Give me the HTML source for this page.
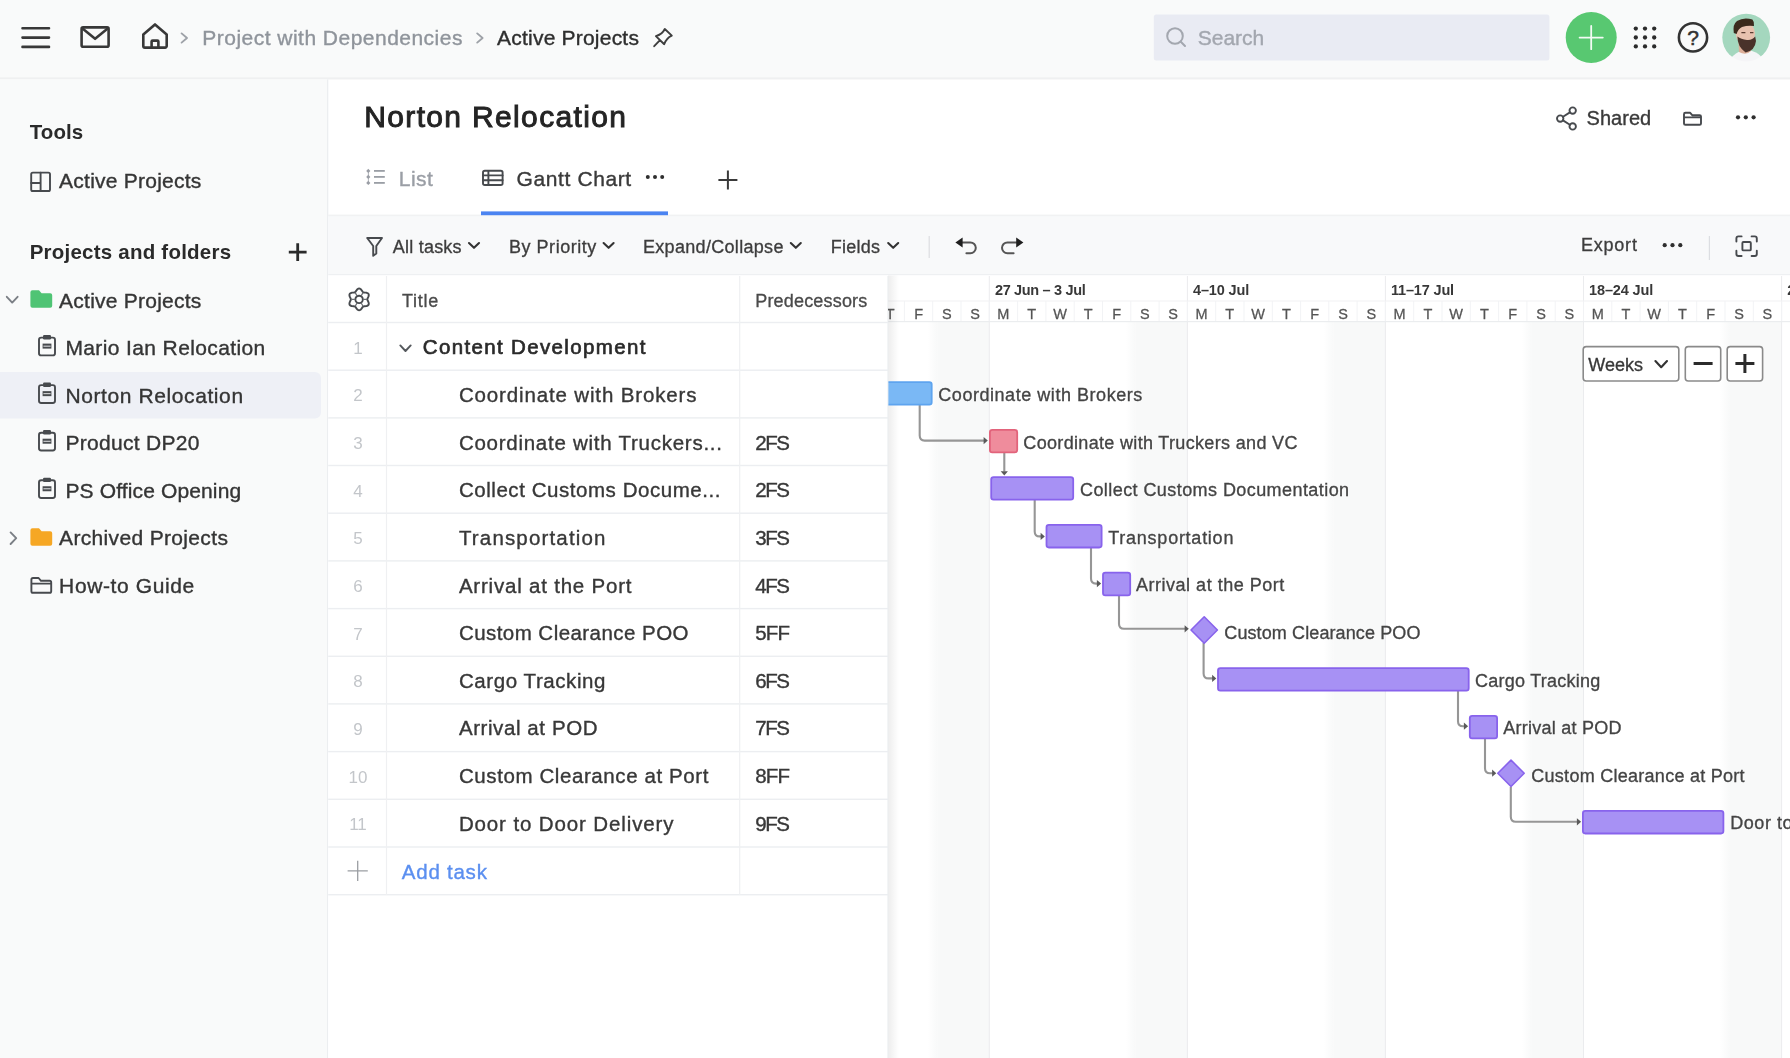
<!DOCTYPE html>
<html lang="en"><head><meta charset="utf-8"><title>Norton Relocation – Gantt Chart</title>
<style>
html,body{margin:0;padding:0;}
body{width:1790px;height:1058px;overflow:hidden;background:#fff;position:relative;font-family:"Liberation Sans",sans-serif;}
#art{position:absolute;left:0;top:0;width:1790px;height:1058px;display:block;}
.t{position:absolute;white-space:pre;line-height:1;}
#txt,#gtxt{position:absolute;left:0;top:0;width:1790px;height:1058px;will-change:transform;}
#gtxt{clip-path:inset(275px 0 0 888px);}

</style></head>
<body>
<svg id="art" width="1790" height="1058" viewBox="0 0 1790 1058">
<defs>
<linearGradient id="shw" x1="0" x2="1" y1="0" y2="0"><stop offset="0" stop-color="#000" stop-opacity="0.07"/><stop offset="1" stop-color="#000" stop-opacity="0"/></linearGradient>
<linearGradient id="wkl" x1="0" x2="1" y1="0" y2="0"><stop offset="0" stop-color="#f8f9f9" stop-opacity="0"/><stop offset="1" stop-color="#f8f9f9" stop-opacity="1"/></linearGradient>
<clipPath id="avc"><circle cx="1746.2" cy="37.6" r="23.9"/></clipPath>
<filter id="soft" x="-10%" y="-10%" width="120%" height="120%"><feGaussianBlur stdDeviation="0.7"/></filter>
<clipPath id="gclip"><rect x="888" y="274.6" width="902" height="784"/></clipPath>
</defs>
<rect x="0" y="0" width="1790" height="79.4" fill="#f9fafa"/>
<rect x="0" y="77.4" width="1790" height="2" fill="#eff0f1"/>
<rect x="0" y="79.4" width="327.5" height="981" fill="#f9fafa"/>
<rect x="327" y="79.4" width="1.3" height="981" fill="#eceef0"/>
<path d="M0,372 H315 a6,6 0 0 1 6,6 V412.5 a6,6 0 0 1 -6,6 H0 Z" fill="#eef0f6"/>
<rect x="328.2" y="215" width="1462" height="59.6" fill="#f8f9fa"/>
<rect x="328.2" y="214.6" width="1462" height="1.6" fill="#f1f2f3"/>
<rect x="481" y="211.4" width="187" height="3.8" fill="#4b84f1"/>
<g clip-path="url(#gclip)">
<rect x="888" y="274.6" width="902" height="784" fill="#fff"/>
<rect x="729.6" y="322" width="10" height="740" fill="url(#wkl)"/><rect x="739.6" y="322" width="51.6" height="740" fill="#f8f9f9"/>
<rect x="927.7" y="322" width="10" height="740" fill="url(#wkl)"/><rect x="937.7" y="322" width="51.6" height="740" fill="#f8f9f9"/>
<rect x="1125.8" y="322" width="10" height="740" fill="url(#wkl)"/><rect x="1135.8" y="322" width="51.6" height="740" fill="#f8f9f9"/>
<rect x="1323.8" y="322" width="10" height="740" fill="url(#wkl)"/><rect x="1333.8" y="322" width="51.6" height="740" fill="#f8f9f9"/>
<rect x="1521.9" y="322" width="10" height="740" fill="url(#wkl)"/><rect x="1531.9" y="322" width="51.6" height="740" fill="#f8f9f9"/>
<rect x="1720.0" y="322" width="10" height="740" fill="url(#wkl)"/><rect x="1730.0" y="322" width="51.6" height="740" fill="#f8f9f9"/>
<rect x="988.8" y="276" width="1" height="790" fill="#ebecee"/>
<rect x="1186.9" y="276" width="1" height="790" fill="#ebecee"/>
<rect x="1384.9" y="276" width="1" height="790" fill="#ebecee"/>
<rect x="1583.0" y="276" width="1" height="790" fill="#ebecee"/>
<rect x="1781.1" y="276" width="1" height="790" fill="#ebecee"/>
<rect x="875.6" y="301" width="1" height="20" fill="#f2f3f5"/>
<rect x="903.9" y="301" width="1" height="20" fill="#f2f3f5"/>
<rect x="932.2" y="301" width="1" height="20" fill="#f2f3f5"/>
<rect x="960.5" y="301" width="1" height="20" fill="#f2f3f5"/>
<rect x="988.8" y="301" width="1" height="20" fill="#f2f3f5"/>
<rect x="1017.1" y="301" width="1" height="20" fill="#f2f3f5"/>
<rect x="1045.4" y="301" width="1" height="20" fill="#f2f3f5"/>
<rect x="1073.7" y="301" width="1" height="20" fill="#f2f3f5"/>
<rect x="1102.0" y="301" width="1" height="20" fill="#f2f3f5"/>
<rect x="1130.3" y="301" width="1" height="20" fill="#f2f3f5"/>
<rect x="1158.6" y="301" width="1" height="20" fill="#f2f3f5"/>
<rect x="1186.9" y="301" width="1" height="20" fill="#f2f3f5"/>
<rect x="1215.2" y="301" width="1" height="20" fill="#f2f3f5"/>
<rect x="1243.5" y="301" width="1" height="20" fill="#f2f3f5"/>
<rect x="1271.8" y="301" width="1" height="20" fill="#f2f3f5"/>
<rect x="1300.1" y="301" width="1" height="20" fill="#f2f3f5"/>
<rect x="1328.3" y="301" width="1" height="20" fill="#f2f3f5"/>
<rect x="1356.6" y="301" width="1" height="20" fill="#f2f3f5"/>
<rect x="1384.9" y="301" width="1" height="20" fill="#f2f3f5"/>
<rect x="1413.2" y="301" width="1" height="20" fill="#f2f3f5"/>
<rect x="1441.5" y="301" width="1" height="20" fill="#f2f3f5"/>
<rect x="1469.8" y="301" width="1" height="20" fill="#f2f3f5"/>
<rect x="1498.1" y="301" width="1" height="20" fill="#f2f3f5"/>
<rect x="1526.4" y="301" width="1" height="20" fill="#f2f3f5"/>
<rect x="1554.7" y="301" width="1" height="20" fill="#f2f3f5"/>
<rect x="1583.0" y="301" width="1" height="20" fill="#f2f3f5"/>
<rect x="1611.3" y="301" width="1" height="20" fill="#f2f3f5"/>
<rect x="1639.6" y="301" width="1" height="20" fill="#f2f3f5"/>
<rect x="1667.9" y="301" width="1" height="20" fill="#f2f3f5"/>
<rect x="1696.2" y="301" width="1" height="20" fill="#f2f3f5"/>
<rect x="1724.5" y="301" width="1" height="20" fill="#f2f3f5"/>
<rect x="1752.8" y="301" width="1" height="20" fill="#f2f3f5"/>
<rect x="1781.1" y="301" width="1" height="20" fill="#f2f3f5"/>
<rect x="1809.4" y="301" width="1" height="20" fill="#f2f3f5"/>
<rect x="888" y="300.5" width="902" height="1" fill="#f1f2f4"/>
<rect x="888" y="321" width="902" height="1.2" fill="#ebedef"/>
<rect x="888" y="275.5" width="11" height="783" fill="url(#shw)"/>
<path d="M919.7,405 V435.6 Q919.7,440.6 924.7,440.6 H985" fill="none" stroke="#969696" stroke-width="2.1" stroke-linejoin="round"/><path d="M983.6,437.0 L987.8,440.6 L983.6,444.2 Z" fill="#5a5a5a"/>
<path d="M1004.3,453 V471.5" fill="none" stroke="#969696" stroke-width="2.1" stroke-linejoin="round"/><path d="M1000.7,471.2 L1004.3,475.4 L1007.9,471.2 Z" fill="#5a5a5a"/>
<path d="M1034.7,500 V531.4 Q1034.7,536.4 1039.7,536.4 H1042" fill="none" stroke="#969696" stroke-width="2.1" stroke-linejoin="round"/><path d="M1040.6,532.8 L1044.8,536.4 L1040.6,540.0 Z" fill="#5a5a5a"/>
<path d="M1091,548 V578.6 Q1091,583.6 1096,583.6 H1098.3" fill="none" stroke="#969696" stroke-width="2.1" stroke-linejoin="round"/><path d="M1096.9,580.0 L1101.1,583.6 L1096.9,587.2 Z" fill="#5a5a5a"/>
<path d="M1119,596 V623.8 Q1119,628.8 1124,628.8 H1186" fill="none" stroke="#969696" stroke-width="2.1" stroke-linejoin="round"/><path d="M1184.6,625.2 L1188.8,628.8 L1184.6,632.4 Z" fill="#5a5a5a"/>
<path d="M1203.6,643 V673.4 Q1203.6,678.4 1208.6,678.4 H1213.5" fill="none" stroke="#969696" stroke-width="2.1" stroke-linejoin="round"/><path d="M1212.1,674.8 L1216.3,678.4 L1212.1,682.0 Z" fill="#5a5a5a"/>
<path d="M1458,691 V721.2 Q1458,726.2 1463,726.2 H1465.3" fill="none" stroke="#969696" stroke-width="2.1" stroke-linejoin="round"/><path d="M1463.9,722.6 L1468.1,726.2 L1463.9,729.8 Z" fill="#5a5a5a"/>
<path d="M1485,739 V768.2 Q1485,773.2 1490,773.2 H1493.5" fill="none" stroke="#969696" stroke-width="2.1" stroke-linejoin="round"/><path d="M1492.1,769.6 L1496.3,773.2 L1492.1,776.8 Z" fill="#5a5a5a"/>
<path d="M1510.8,787 V816.8 Q1510.8,821.8 1515.8,821.8 H1578.3" fill="none" stroke="#969696" stroke-width="2.1" stroke-linejoin="round"/><path d="M1576.9,818.2 L1581.1,821.8 L1576.9,825.4 Z" fill="#5a5a5a"/>
<rect x="870.5" y="382.1" width="61.2" height="22.6" rx="2.4" fill="#7ab8f5" stroke="#5ea4ef" stroke-width="1.8"/>
<rect x="989.9" y="429.8" width="27.3" height="22.6" rx="2.4" fill="#ef8c9c" stroke="#e2637b" stroke-width="1.8"/>
<rect x="991.2" y="477.1" width="82.0" height="22.6" rx="2.4" fill="#a791f4" stroke="#8863ec" stroke-width="1.8"/>
<rect x="1046.5" y="524.9" width="55.1" height="22.6" rx="2.4" fill="#a791f4" stroke="#8863ec" stroke-width="1.8"/>
<rect x="1103.0" y="572.7" width="27.2" height="22.6" rx="2.4" fill="#a791f4" stroke="#8863ec" stroke-width="1.8"/>
<rect x="1218.0" y="668.1" width="250.7" height="22.6" rx="2.4" fill="#a791f4" stroke="#8863ec" stroke-width="1.8"/>
<rect x="1469.8" y="715.8" width="27.3" height="22.6" rx="2.4" fill="#a791f4" stroke="#8863ec" stroke-width="1.8"/>
<rect x="1582.9" y="810.9" width="140.5" height="22.6" rx="2.4" fill="#a791f4" stroke="#8863ec" stroke-width="1.8"/>
<path d="M1204.2,616.8 L1217.4,630 L1204.2,643.2 L1191.0,630 Z" fill="#a791f4" stroke="#8863ec" stroke-width="1.6" stroke-linejoin="round"/>
<path d="M1511,760.0999999999999 L1524.2,773.3 L1511,786.5 L1497.8,773.3 Z" fill="#a791f4" stroke="#8863ec" stroke-width="1.6" stroke-linejoin="round"/>
<rect x="1583.2" y="346.6" width="95.6" height="34.4" rx="3" fill="#fff" stroke="#8a8a8a" stroke-width="1.6"/>
<rect x="1685.3" y="346.6" width="35.4" height="34.4" rx="3" fill="#fff" stroke="#8a8a8a" stroke-width="1.6"/>
<rect x="1727.2" y="346.6" width="35.4" height="34.4" rx="3" fill="#fff" stroke="#8a8a8a" stroke-width="1.6"/>
<path d="M1655.4,361 L1661.2,367.2 L1667,361" fill="none" stroke="#333" stroke-width="2.1" stroke-linecap="round" stroke-linejoin="round"/>
<path d="M1693.6,363.6 H1712.6" stroke="#2b2b2b" stroke-width="3" fill="none"/>
<path d="M1735.4,363.6 H1754.4 M1744.9,354.1 V373.1" stroke="#2b2b2b" stroke-width="3" fill="none"/>
</g>
<rect x="328.2" y="274.6" width="559.8" height="784" fill="#fff"/>
<rect x="328.2" y="321.8" width="559.8" height="1.4" fill="#eceef1"/>
<rect x="328.2" y="369.5" width="559.8" height="1.4" fill="#eceef1"/>
<rect x="328.2" y="417.2" width="559.8" height="1.4" fill="#eceef1"/>
<rect x="328.2" y="464.8" width="559.8" height="1.4" fill="#eceef1"/>
<rect x="328.2" y="512.5" width="559.8" height="1.4" fill="#eceef1"/>
<rect x="328.2" y="560.2" width="559.8" height="1.4" fill="#eceef1"/>
<rect x="328.2" y="607.9" width="559.8" height="1.4" fill="#eceef1"/>
<rect x="328.2" y="655.6" width="559.8" height="1.4" fill="#eceef1"/>
<rect x="328.2" y="703.2" width="559.8" height="1.4" fill="#eceef1"/>
<rect x="328.2" y="750.9" width="559.8" height="1.4" fill="#eceef1"/>
<rect x="328.2" y="798.6" width="559.8" height="1.4" fill="#eceef1"/>
<rect x="328.2" y="846.3" width="559.8" height="1.4" fill="#eceef1"/>
<rect x="328.2" y="894.0" width="559.8" height="1.4" fill="#eceef1"/>
<rect x="385.9" y="276" width="1.2" height="619" fill="#eff0f2"/>
<rect x="739.1" y="276" width="1.2" height="619" fill="#eff0f2"/>
<rect x="887.4" y="276" width="1" height="783" fill="#eceef0"/>
<rect x="328.2" y="274" width="1462" height="1.2" fill="#eef0f2"/>
<path d="M22.5,28.2 H49 M22.5,37.6 H49 M22.5,46.9 H49" fill="none" stroke="#383838" stroke-width="2.6" stroke-linecap="round" stroke-linejoin="round"/>
<rect x="81.6" y="27.4" width="27" height="19.4" rx="1.5" fill="none" stroke="#383838" stroke-width="2.6" stroke-linecap="round" stroke-linejoin="round"/><path d="M82.5,28.6 L95.1,38.8 L107.7,28.6" fill="none" stroke="#383838" stroke-width="2.6" stroke-linecap="round" stroke-linejoin="round"/>
<path d="M143.3,34.6 L155,24.4 L166.7,34.6 V46 a1.6,1.6 0 0 1 -1.6,1.6 H144.9 a1.6,1.6 0 0 1 -1.6,-1.6 Z" fill="none" stroke="#383838" stroke-width="2.6" stroke-linecap="round" stroke-linejoin="round"/><path d="M151.6,47.4 V41.6 a1,1 0 0 1 1,-1 H157.4 a1,1 0 0 1 1,1 V47.4" fill="none" stroke="#383838" stroke-width="2.6" stroke-linecap="round" stroke-linejoin="round"/>
<path d="M181.6,33.4 L187,38 L181.6,42.6" fill="none" stroke="#9ea2a8" stroke-width="1.9" stroke-linecap="round" stroke-linejoin="round"/>
<path d="M477.2,33.4 L482.6,38 L477.2,42.6" fill="none" stroke="#9ea2a8" stroke-width="1.9" stroke-linecap="round" stroke-linejoin="round"/>
<path d="M664.8,29 L671.8,35.6 Q666.4,38 664.2,44.2 L655.9,36.1 Q662.2,34.4 664.8,29 Z M660,40.2 L654.2,46.2" fill="none" stroke="#3e3e3e" stroke-width="1.9" stroke-linejoin="round" stroke-linecap="round"/>
<rect x="1153.8" y="14.6" width="395.6" height="45.8" rx="2.5" fill="#e9ebf3"/>
<circle cx="1175" cy="36" r="7.8" fill="none" stroke="#a3a7af" stroke-width="2"/><path d="M1180.8,41.8 L1185,46" stroke="#a3a7af" stroke-width="2" stroke-linecap="round"/>
<circle cx="1591.2" cy="37.5" r="25.5" fill="#58c871"/><path d="M1579.6,37.6 H1602.8 M1591.2,26 V49.2" stroke="#f3fbf5" stroke-width="1.8" stroke-linecap="round"/>
<circle cx="1635.8" cy="28.6" r="2.15" fill="#2b2b2b"/>
<circle cx="1635.8" cy="37.5" r="2.15" fill="#2b2b2b"/>
<circle cx="1635.8" cy="46.4" r="2.15" fill="#2b2b2b"/>
<circle cx="1645" cy="28.6" r="2.15" fill="#2b2b2b"/>
<circle cx="1645" cy="37.5" r="2.15" fill="#2b2b2b"/>
<circle cx="1645" cy="46.4" r="2.15" fill="#2b2b2b"/>
<circle cx="1654.2" cy="28.6" r="2.15" fill="#2b2b2b"/>
<circle cx="1654.2" cy="37.5" r="2.15" fill="#2b2b2b"/>
<circle cx="1654.2" cy="46.4" r="2.15" fill="#2b2b2b"/>
<circle cx="1693" cy="37.4" r="14.1" fill="none" stroke="#333" stroke-width="2.6"/>
<text x="1693" y="44.8" text-anchor="middle" font-family="Liberation Sans, sans-serif" font-size="21" font-weight="400" stroke="#333" stroke-width="0.5" fill="#333">?</text>
<g clip-path="url(#avc)" filter="url(#soft)">
<rect x="1718" y="10" width="58" height="56" fill="#a4d7be"/>
<path d="M1727,66 L1731,58 Q1736,52.5 1741,51 L1752,51 Q1759,53 1762,58 L1766,66 Z" fill="#f5f5f7"/>
<path d="M1738.5,42 L1739,52 Q1746,56 1751,51 L1752,44 Z" fill="#dcae98"/>
<ellipse cx="1745.4" cy="33.4" rx="9.6" ry="11.2" fill="#e8c2af"/>
<path d="M1733.8,33 Q1732.6,24 1737,21 Q1744,16.6 1752.4,19.6 Q1754.6,22 1754,26 Q1748,25 1742,27 Q1738,29 1736.6,34 Z" fill="#3a291e"/>
<path d="M1737.4,36.6 Q1737.4,47 1745.6,52.4 Q1755,50.6 1756,41 L1755.2,36.6 Q1752,40.6 1747,40 Q1741,39.6 1737.4,36.6 Z" fill="#49332a"/>
<path d="M1741.4,32.6 h4 M1750,32.6 h3.4" stroke="#5a3d30" stroke-width="1.4"/>
</g>
<rect x="31.2" y="172.6" width="18.8" height="18.4" rx="1.6" fill="none" stroke="#474a4e" stroke-width="1.9" stroke-linecap="round" stroke-linejoin="round"/><path d="M40.6,172.6 V191 M31.2,183 H40.6" fill="none" stroke="#474a4e" stroke-width="1.9" stroke-linecap="round" stroke-linejoin="round"/>
<path d="M288.8,252.2 H306.6 M297.7,243.3 V261.1" stroke="#2b2b2b" stroke-width="2.8" fill="none"/>
<path d="M6.8,296.8 L12.2,302.6 L17.6,296.8" fill="none" stroke="#7b7f85" stroke-width="1.9" stroke-linecap="round" stroke-linejoin="round"/>
<path d="M10.6,532.4 L16.2,538.2 L10.6,544" fill="none" stroke="#7b7f85" stroke-width="1.9" stroke-linecap="round" stroke-linejoin="round"/>
<path d="M30.4,292.3 a2,2 0 0 1 2,-2 h6.6 l2.6,3 h8.6 a2,2 0 0 1 2,2 v10.4 a2,2 0 0 1 -2,2 h-17.8 a2,2 0 0 1 -2,-2 Z" fill="#4fc474"/>
<path d="M30.4,530.3 a2,2 0 0 1 2,-2 h6.6 l2.6,3 h8.6 a2,2 0 0 1 2,2 v10.4 a2,2 0 0 1 -2,2 h-17.8 a2,2 0 0 1 -2,-2 Z" fill="#f6a724"/>
<path d="M31.4,579.6 a1.6,1.6 0 0 1 1.6,-1.6 h5.6 l2.4,2.8 h8.6 a1.6,1.6 0 0 1 1.6,1.6 v8.8 a1.6,1.6 0 0 1 -1.6,1.6 h-16.6 a1.6,1.6 0 0 1 -1.6,-1.6 Z M31.4,583.6 H51" fill="none" stroke="#474a4e" stroke-width="1.9" stroke-linecap="round" stroke-linejoin="round"/>
<rect x="39" y="337.6" width="16" height="17.8" rx="2.2" fill="none" stroke="#474a4e" stroke-width="1.9" stroke-linecap="round" stroke-linejoin="round"/><rect x="43" y="335.0" width="8" height="4.4" rx="1.2" fill="#474a4e"/><rect x="42.6" y="343.6" width="8.8" height="5" fill="#474a4e"/><rect x="43.4" y="345.7" width="7.2" height="0.9" fill="#f4f5f7"/>
<rect x="39" y="385.15000000000003" width="16" height="17.8" rx="2.2" fill="none" stroke="#474a4e" stroke-width="1.9" stroke-linecap="round" stroke-linejoin="round"/><rect x="43" y="382.55" width="8" height="4.4" rx="1.2" fill="#474a4e"/><rect x="42.6" y="391.15000000000003" width="8.8" height="5" fill="#474a4e"/><rect x="43.4" y="393.25" width="7.2" height="0.9" fill="#f4f5f7"/>
<rect x="39" y="432.70000000000005" width="16" height="17.8" rx="2.2" fill="none" stroke="#474a4e" stroke-width="1.9" stroke-linecap="round" stroke-linejoin="round"/><rect x="43" y="430.1" width="8" height="4.4" rx="1.2" fill="#474a4e"/><rect x="42.6" y="438.70000000000005" width="8.8" height="5" fill="#474a4e"/><rect x="43.4" y="440.8" width="7.2" height="0.9" fill="#f4f5f7"/>
<rect x="39" y="480.25" width="16" height="17.8" rx="2.2" fill="none" stroke="#474a4e" stroke-width="1.9" stroke-linecap="round" stroke-linejoin="round"/><rect x="43" y="477.65" width="8" height="4.4" rx="1.2" fill="#474a4e"/><rect x="42.6" y="486.25" width="8.8" height="5" fill="#474a4e"/><rect x="43.4" y="488.34999999999997" width="7.2" height="0.9" fill="#f4f5f7"/>
<circle cx="1572.7" cy="110.6" r="3.2" fill="none" stroke="#474a4e" stroke-width="1.9" stroke-linecap="round" stroke-linejoin="round"/><circle cx="1560.2" cy="118.6" r="3.2" fill="none" stroke="#474a4e" stroke-width="1.9" stroke-linecap="round" stroke-linejoin="round"/><circle cx="1572.7" cy="126.4" r="3.2" fill="none" stroke="#474a4e" stroke-width="1.9" stroke-linecap="round" stroke-linejoin="round"/><path d="M1563,116.8 L1569.9,112.4 M1563,120.4 L1569.9,124.7" fill="none" stroke="#474a4e" stroke-width="1.9" stroke-linecap="round" stroke-linejoin="round"/>
<path d="M1684,114.2 a1.4,1.4 0 0 1 1.4,-1.4 h4.8 l2,2.4 h7.4 a1.4,1.4 0 0 1 1.4,1.4 v6.8 a1.4,1.4 0 0 1 -1.4,1.4 h-14.2 a1.4,1.4 0 0 1 -1.4,-1.4 Z M1684,117.4 H1701" fill="none" stroke="#474a4e" stroke-width="1.9" stroke-linecap="round" stroke-linejoin="round"/>
<circle cx="1738" cy="117.3" r="2.1" fill="#2f2f2f"/>
<circle cx="1745.8" cy="117.3" r="2.1" fill="#2f2f2f"/>
<circle cx="1753.6" cy="117.3" r="2.1" fill="#2f2f2f"/>
<path d="M368.3,168.8 L370.4,170.9 L368.3,173.0 L366.2,170.9 Z" fill="#9a9ea5"/><rect x="374" y="170.0" width="10.8" height="1.8" fill="#9a9ea5"/>
<path d="M368.3,174.8 L370.4,176.9 L368.3,179.0 L366.2,176.9 Z" fill="#9a9ea5"/><rect x="374" y="176.0" width="10.8" height="1.8" fill="#9a9ea5"/>
<path d="M368.3,180.8 L370.4,182.9 L368.3,185.0 L366.2,182.9 Z" fill="#9a9ea5"/><rect x="374" y="182.0" width="10.8" height="1.8" fill="#9a9ea5"/>
<rect x="367.9" y="170" width="0.8" height="14" fill="#9a9ea5"/>
<rect x="483" y="170.8" width="19.6" height="14.2" rx="1.8" fill="none" stroke="#474a4e" stroke-width="1.9" stroke-linecap="round" stroke-linejoin="round"/><path d="M483,175.4 H502.6 M483,180.2 H502.6 M488.4,171 V185" fill="none" stroke="#474a4e" stroke-width="1.9" stroke-linecap="round" stroke-linejoin="round" stroke-width="2"/>
<circle cx="647.8" cy="176.9" r="2" fill="#2f2f2f"/>
<circle cx="655" cy="176.9" r="2" fill="#2f2f2f"/>
<circle cx="662.2" cy="176.9" r="2" fill="#2f2f2f"/>
<path d="M718.4,180 H737.4 M727.9,170.5 V189.5" stroke="#3a3a3a" stroke-width="2" fill="none"/>
<path d="M367.2,238 H382 L376.3,246 V253.4 L373.2,255.8 V246 Z" fill="none" stroke="#474a4e" stroke-width="1.9" stroke-linecap="round" stroke-linejoin="round" stroke-width="1.9"/>
<path d="M469,243 L474,247.8 L479,243" fill="none" stroke="#333" stroke-width="2.1" stroke-linecap="round" stroke-linejoin="round"/>
<path d="M603.6,243 L608.6,247.8 L613.6,243" fill="none" stroke="#333" stroke-width="2.1" stroke-linecap="round" stroke-linejoin="round"/>
<path d="M790.8,243 L795.8,247.8 L800.8,243" fill="none" stroke="#333" stroke-width="2.1" stroke-linecap="round" stroke-linejoin="round"/>
<path d="M888.2,243 L893.2,247.8 L898.2,243" fill="none" stroke="#333" stroke-width="2.1" stroke-linecap="round" stroke-linejoin="round"/>
<rect x="928.6" y="236" width="1.2" height="22" fill="#dcdee2"/>
<path d="M962,242.4 H970.4 a5.4,5.4 0 0 1 0,10.8 H966.4" fill="none" stroke="#555" stroke-width="2" stroke-linecap="round" stroke-linejoin="round"/><path d="M962.6,237.4 L955.4,242.4 L962.6,247.4 Z" fill="#1f1f1f"/>
<path d="M1016.5,242.4 H1007.4 a5.4,5.4 0 0 0 0,10.8 H1013.6" fill="none" stroke="#555" stroke-width="2" stroke-linecap="round" stroke-linejoin="round"/><path d="M1016.2,237.4 L1023.4,242.4 L1016.2,247.4 Z" fill="#1f1f1f"/>
<circle cx="1664.7" cy="245.2" r="2.1" fill="#2f2f2f"/>
<circle cx="1672.5" cy="245.2" r="2.1" fill="#2f2f2f"/>
<circle cx="1680.3" cy="245.2" r="2.1" fill="#2f2f2f"/>
<rect x="1708.8" y="236" width="1.2" height="24" fill="#dcdee2"/>
<path d="M1736.4,241.6 V238.4 a2,2 0 0 1 2,-2 H1741.6 M1751.6,236.4 H1754.8 a2,2 0 0 1 2,2 V241.6 M1756.8,250.8 V254 a2,2 0 0 1 -2,2 H1751.6 M1741.6,256 H1738.4 a2,2 0 0 1 -2,-2 V250.8" fill="none" stroke="#474a4e" stroke-width="1.9" stroke-linecap="round" stroke-linejoin="round" stroke-width="2.2"/><rect x="1742.4" y="242" width="8.4" height="8.4" rx="1" fill="none" stroke="#474a4e" stroke-width="1.9" stroke-linecap="round" stroke-linejoin="round" stroke-width="2.2"/>
<path d="M359.10,288.55 L359.80,288.67 L360.47,289.02 L361.06,289.55 L361.57,290.18 L362.01,290.83 L362.40,291.43 L362.79,291.91 L363.23,292.26 L363.74,292.46 L364.35,292.55 L365.07,292.59 L365.85,292.65 L366.65,292.78 L367.41,293.03 L368.04,293.43 L368.50,293.97 L368.74,294.64 L368.77,295.39 L368.61,296.17 L368.32,296.93 L367.98,297.63 L367.66,298.27 L367.43,298.85 L367.35,299.40 L367.43,299.95 L367.66,300.53 L367.98,301.17 L368.32,301.87 L368.61,302.63 L368.77,303.41 L368.74,304.16 L368.50,304.82 L368.04,305.37 L367.41,305.77 L366.65,306.02 L365.85,306.15 L365.07,306.21 L364.35,306.25 L363.74,306.34 L363.23,306.54 L362.79,306.89 L362.40,307.37 L362.01,307.97 L361.57,308.62 L361.06,309.25 L360.47,309.78 L359.80,310.13 L359.10,310.25 L358.40,310.13 L357.73,309.78 L357.14,309.25 L356.63,308.62 L356.19,307.97 L355.80,307.37 L355.41,306.89 L354.98,306.54 L354.46,306.34 L353.85,306.25 L353.13,306.21 L352.35,306.15 L351.55,306.02 L350.79,305.77 L350.16,305.37 L349.70,304.82 L349.46,304.16 L349.43,303.41 L349.59,302.63 L349.88,301.87 L350.22,301.17 L350.54,300.53 L350.77,299.95 L350.85,299.40 L350.77,298.85 L350.54,298.27 L350.22,297.63 L349.88,296.93 L349.59,296.17 L349.43,295.39 L349.46,294.64 L349.70,293.97 L350.16,293.43 L350.79,293.03 L351.55,292.78 L352.35,292.65 L353.13,292.59 L353.85,292.55 L354.46,292.46 L354.98,292.26 L355.41,291.91 L355.80,291.43 L356.19,290.83 L356.63,290.18 L357.14,289.55 L357.73,289.02 L358.40,288.67 Z" fill="none" stroke="#474a4e" stroke-width="1.9" stroke-linecap="round" stroke-linejoin="round" stroke-width="1.8"/><circle cx="359.1" cy="299.4" r="3.7" fill="none" stroke="#474a4e" stroke-width="1.9" stroke-linecap="round" stroke-linejoin="round" stroke-width="1.7"/>
<path d="M361.05,296.02 L363.05,292.56 M363.00,299.40 L367.00,299.40 M361.05,302.78 L363.05,306.24 M357.15,302.78 L355.15,306.24 M355.20,299.40 L351.20,299.40 M357.15,296.02 L355.15,292.56" fill="none" stroke="#6a6d71" stroke-width="1.3"/>
<path d="M400.3,345.4 L405.5,351 L410.7,345.4" fill="none" stroke="#55595d" stroke-width="1.9" stroke-linecap="round" stroke-linejoin="round"/>
<path d="M347.6,870.8 H367.8 M357.7,860.7 V880.9" stroke="#9b9ea3" stroke-width="1.3" fill="none"/>
</svg>
<div id="txt">
<div class="t" style="top:27.2px;font-size:21px;color:#8f949b;-webkit-text-stroke:0.38px #8f949b;left:202.3px;letter-spacing:0.477px;">Project with Dependencies</div>
<div class="t" style="top:27.2px;font-size:21px;color:#2e2e2e;-webkit-text-stroke:0.38px #2e2e2e;left:497.1px;letter-spacing:0.208px;">Active Projects</div>
<div class="t" style="top:27.4px;font-size:21px;color:#a3a7af;-webkit-text-stroke:0.38px #a3a7af;left:1197.7px;letter-spacing:0.011px;">Search</div>
<div class="t" style="top:122.1px;font-size:20.5px;color:#2a2a2a;font-weight:700;left:29.7px;letter-spacing:0.111px;">Tools</div>
<div class="t" style="top:170.4px;font-size:21px;color:#353535;-webkit-text-stroke:0.38px #353535;left:59.1px;letter-spacing:0.236px;">Active Projects</div>
<div class="t" style="top:242.1px;font-size:20.5px;color:#2a2a2a;font-weight:700;left:29.7px;letter-spacing:0.227px;">Projects and folders</div>
<div class="t" style="top:289.6px;font-size:21px;color:#353535;-webkit-text-stroke:0.38px #353535;left:59.1px;letter-spacing:0.236px;">Active Projects</div>
<div class="t" style="top:337.2px;font-size:21px;color:#353535;-webkit-text-stroke:0.38px #353535;left:65.4px;letter-spacing:0.384px;">Mario Ian Relocation</div>
<div class="t" style="top:384.7px;font-size:21px;color:#353535;-webkit-text-stroke:0.38px #353535;left:65.4px;letter-spacing:0.600px;">Norton Relocation</div>
<div class="t" style="top:432.3px;font-size:21px;color:#353535;-webkit-text-stroke:0.38px #353535;left:65.4px;letter-spacing:0.295px;">Product DP20</div>
<div class="t" style="top:479.8px;font-size:21px;color:#353535;-webkit-text-stroke:0.38px #353535;left:65.4px;letter-spacing:0.140px;">PS Office Opening</div>
<div class="t" style="top:527.4px;font-size:21px;color:#353535;-webkit-text-stroke:0.38px #353535;left:59.1px;letter-spacing:0.337px;">Archived Projects</div>
<div class="t" style="top:574.9px;font-size:21px;color:#353535;-webkit-text-stroke:0.38px #353535;left:59.1px;letter-spacing:0.619px;">How-to Guide</div>
<div class="t" style="top:101.8px;font-size:30px;color:#242424;-webkit-text-stroke:0.96px #242424;left:364.3px;letter-spacing:1.341px;">Norton Relocation</div>
<div class="t" style="top:108.3px;font-size:20px;color:#3a3a3a;-webkit-text-stroke:0.36px #3a3a3a;left:1586.6px;letter-spacing:0.020px;">Shared</div>
<div class="t" style="top:167.5px;font-size:21px;color:#9a9ea5;-webkit-text-stroke:0.38px #9a9ea5;left:398.8px;letter-spacing:0.471px;">List</div>
<div class="t" style="top:167.5px;font-size:21px;color:#3a3a3a;-webkit-text-stroke:0.38px #3a3a3a;left:516.6px;letter-spacing:0.604px;">Gantt Chart</div>
<div class="t" style="top:237.7px;font-size:18px;color:#3d3d3d;-webkit-text-stroke:0.32px #3d3d3d;left:392.8px;letter-spacing:0.221px;">All tasks</div>
<div class="t" style="top:237.7px;font-size:18px;color:#3d3d3d;-webkit-text-stroke:0.32px #3d3d3d;left:509.0px;letter-spacing:0.528px;">By Priority</div>
<div class="t" style="top:237.7px;font-size:18px;color:#3d3d3d;-webkit-text-stroke:0.32px #3d3d3d;left:643.0px;letter-spacing:0.308px;">Expand/Collapse</div>
<div class="t" style="top:237.7px;font-size:18px;color:#3d3d3d;-webkit-text-stroke:0.32px #3d3d3d;left:830.8px;letter-spacing:0.217px;">Fields</div>
<div class="t" style="top:236.4px;font-size:18px;color:#3d3d3d;-webkit-text-stroke:0.32px #3d3d3d;left:1581.0px;letter-spacing:0.774px;">Export</div>
<div class="t" style="top:292.0px;font-size:18px;color:#4a4a4a;-webkit-text-stroke:0.32px #4a4a4a;left:401.9px;letter-spacing:0.764px;">Title</div>
<div class="t" style="top:292.0px;font-size:18px;color:#4a4a4a;-webkit-text-stroke:0.32px #4a4a4a;left:755.2px;letter-spacing:0.185px;">Predecessors</div>
<div class="t" style="top:339.7px;font-size:17px;color:#c3c6ca;left:338px;width:40px;text-align:center;">1</div>
<div class="t" style="top:337.2px;font-size:20.5px;color:#2a2a2a;-webkit-text-stroke:0.66px #2a2a2a;left:422.8px;letter-spacing:1.350px;">Content Development</div>
<div class="t" style="top:387.4px;font-size:17px;color:#c3c6ca;left:338px;width:40px;text-align:center;">2</div>
<div class="t" style="top:384.9px;font-size:20.5px;color:#383838;-webkit-text-stroke:0.37px #383838;left:458.9px;letter-spacing:0.856px;">Coordinate with Brokers</div>
<div class="t" style="top:435.0px;font-size:17px;color:#c3c6ca;left:338px;width:40px;text-align:center;">3</div>
<div class="t" style="top:432.5px;font-size:20.5px;color:#383838;-webkit-text-stroke:0.37px #383838;left:458.9px;letter-spacing:0.741px;">Coordinate with Truckers...</div>
<div class="t" style="top:432.5px;font-size:20.5px;color:#383838;-webkit-text-stroke:0.37px #383838;left:755.2px;letter-spacing:-1.405px;">2FS</div>
<div class="t" style="top:482.7px;font-size:17px;color:#c3c6ca;left:338px;width:40px;text-align:center;">4</div>
<div class="t" style="top:480.2px;font-size:20.5px;color:#383838;-webkit-text-stroke:0.37px #383838;left:458.9px;letter-spacing:0.552px;">Collect Customs Docume...</div>
<div class="t" style="top:480.2px;font-size:20.5px;color:#383838;-webkit-text-stroke:0.37px #383838;left:755.2px;letter-spacing:-1.405px;">2FS</div>
<div class="t" style="top:530.3px;font-size:17px;color:#c3c6ca;left:338px;width:40px;text-align:center;">5</div>
<div class="t" style="top:527.8px;font-size:20.5px;color:#383838;-webkit-text-stroke:0.37px #383838;left:458.9px;letter-spacing:1.168px;">Transportation</div>
<div class="t" style="top:527.8px;font-size:20.5px;color:#383838;-webkit-text-stroke:0.37px #383838;left:755.2px;letter-spacing:-1.405px;">3FS</div>
<div class="t" style="top:578.0px;font-size:17px;color:#c3c6ca;left:338px;width:40px;text-align:center;">6</div>
<div class="t" style="top:575.5px;font-size:20.5px;color:#383838;-webkit-text-stroke:0.37px #383838;left:458.9px;letter-spacing:0.790px;">Arrival at the Port</div>
<div class="t" style="top:575.5px;font-size:20.5px;color:#383838;-webkit-text-stroke:0.37px #383838;left:755.2px;letter-spacing:-1.405px;">4FS</div>
<div class="t" style="top:625.6px;font-size:17px;color:#c3c6ca;left:338px;width:40px;text-align:center;">7</div>
<div class="t" style="top:623.1px;font-size:20.5px;color:#383838;-webkit-text-stroke:0.37px #383838;left:458.9px;letter-spacing:0.451px;">Custom Clearance POO</div>
<div class="t" style="top:623.1px;font-size:20.5px;color:#383838;-webkit-text-stroke:0.37px #383838;left:755.2px;letter-spacing:-0.827px;">5FF</div>
<div class="t" style="top:673.3px;font-size:17px;color:#c3c6ca;left:338px;width:40px;text-align:center;">8</div>
<div class="t" style="top:670.8px;font-size:20.5px;color:#383838;-webkit-text-stroke:0.37px #383838;left:458.9px;letter-spacing:0.583px;">Cargo Tracking</div>
<div class="t" style="top:670.8px;font-size:20.5px;color:#383838;-webkit-text-stroke:0.37px #383838;left:755.2px;letter-spacing:-1.405px;">6FS</div>
<div class="t" style="top:720.9px;font-size:17px;color:#c3c6ca;left:338px;width:40px;text-align:center;">9</div>
<div class="t" style="top:718.4px;font-size:20.5px;color:#383838;-webkit-text-stroke:0.37px #383838;left:458.9px;letter-spacing:0.585px;">Arrival at POD</div>
<div class="t" style="top:718.4px;font-size:20.5px;color:#383838;-webkit-text-stroke:0.37px #383838;left:755.2px;letter-spacing:-1.405px;">7FS</div>
<div class="t" style="top:768.6px;font-size:17px;color:#c3c6ca;left:338px;width:40px;text-align:center;">10</div>
<div class="t" style="top:766.1px;font-size:20.5px;color:#383838;-webkit-text-stroke:0.37px #383838;left:458.9px;letter-spacing:0.597px;">Custom Clearance at Port</div>
<div class="t" style="top:766.1px;font-size:20.5px;color:#383838;-webkit-text-stroke:0.37px #383838;left:755.2px;letter-spacing:-0.827px;">8FF</div>
<div class="t" style="top:816.2px;font-size:17px;color:#c3c6ca;left:338px;width:40px;text-align:center;">11</div>
<div class="t" style="top:813.7px;font-size:20.5px;color:#383838;-webkit-text-stroke:0.37px #383838;left:458.9px;letter-spacing:0.875px;">Door to Door Delivery</div>
<div class="t" style="top:813.7px;font-size:20.5px;color:#383838;-webkit-text-stroke:0.37px #383838;left:755.2px;letter-spacing:-1.405px;">9FS</div>
<div class="t" style="top:861.6px;font-size:20.5px;color:#5b8ff0;-webkit-text-stroke:0.37px #5b8ff0;left:401.8px;letter-spacing:0.760px;">Add task</div>
</div>
<div id="gtxt">
<div class="t" style="top:282.7px;font-size:14.5px;color:#383838;font-weight:700;left:994.9px;letter-spacing:-0.324px;">27 Jun – 3 Jul</div>
<div class="t" style="top:282.7px;font-size:14.5px;color:#383838;font-weight:700;left:1193.0px;letter-spacing:-0.150px;">4–10 Jul</div>
<div class="t" style="top:282.7px;font-size:14.5px;color:#383838;font-weight:700;left:1391.0px;letter-spacing:-0.175px;">11–17 Jul</div>
<div class="t" style="top:282.7px;font-size:14.5px;color:#383838;font-weight:700;left:1589.1px;letter-spacing:-0.139px;">18–24 Jul</div>
<div class="t" style="top:282.7px;font-size:14.5px;color:#383838;font-weight:700;left:1787.2px;letter-spacing:-0.139px;">25–31 Jul</div>
<div class="t" style="top:306.5px;font-size:14.5px;color:#555555;-webkit-text-stroke:0.26px #555555;left:875.3px;width:30px;text-align:center;">T</div>
<div class="t" style="top:306.5px;font-size:14.5px;color:#555555;-webkit-text-stroke:0.26px #555555;left:903.6px;width:30px;text-align:center;">F</div>
<div class="t" style="top:306.5px;font-size:14.5px;color:#555555;-webkit-text-stroke:0.26px #555555;left:931.9px;width:30px;text-align:center;">S</div>
<div class="t" style="top:306.5px;font-size:14.5px;color:#555555;-webkit-text-stroke:0.26px #555555;left:960.2px;width:30px;text-align:center;">S</div>
<div class="t" style="top:306.5px;font-size:14.5px;color:#555555;-webkit-text-stroke:0.26px #555555;left:988.4px;width:30px;text-align:center;">M</div>
<div class="t" style="top:306.5px;font-size:14.5px;color:#555555;-webkit-text-stroke:0.26px #555555;left:1016.7px;width:30px;text-align:center;">T</div>
<div class="t" style="top:306.5px;font-size:14.5px;color:#555555;-webkit-text-stroke:0.26px #555555;left:1045.0px;width:30px;text-align:center;">W</div>
<div class="t" style="top:306.5px;font-size:14.5px;color:#555555;-webkit-text-stroke:0.26px #555555;left:1073.3px;width:30px;text-align:center;">T</div>
<div class="t" style="top:306.5px;font-size:14.5px;color:#555555;-webkit-text-stroke:0.26px #555555;left:1101.6px;width:30px;text-align:center;">F</div>
<div class="t" style="top:306.5px;font-size:14.5px;color:#555555;-webkit-text-stroke:0.26px #555555;left:1129.9px;width:30px;text-align:center;">S</div>
<div class="t" style="top:306.5px;font-size:14.5px;color:#555555;-webkit-text-stroke:0.26px #555555;left:1158.2px;width:30px;text-align:center;">S</div>
<div class="t" style="top:306.5px;font-size:14.5px;color:#555555;-webkit-text-stroke:0.26px #555555;left:1186.5px;width:30px;text-align:center;">M</div>
<div class="t" style="top:306.5px;font-size:14.5px;color:#555555;-webkit-text-stroke:0.26px #555555;left:1214.8px;width:30px;text-align:center;">T</div>
<div class="t" style="top:306.5px;font-size:14.5px;color:#555555;-webkit-text-stroke:0.26px #555555;left:1243.1px;width:30px;text-align:center;">W</div>
<div class="t" style="top:306.5px;font-size:14.5px;color:#555555;-webkit-text-stroke:0.26px #555555;left:1271.4px;width:30px;text-align:center;">T</div>
<div class="t" style="top:306.5px;font-size:14.5px;color:#555555;-webkit-text-stroke:0.26px #555555;left:1299.7px;width:30px;text-align:center;">F</div>
<div class="t" style="top:306.5px;font-size:14.5px;color:#555555;-webkit-text-stroke:0.26px #555555;left:1328.0px;width:30px;text-align:center;">S</div>
<div class="t" style="top:306.5px;font-size:14.5px;color:#555555;-webkit-text-stroke:0.26px #555555;left:1356.3px;width:30px;text-align:center;">S</div>
<div class="t" style="top:306.5px;font-size:14.5px;color:#555555;-webkit-text-stroke:0.26px #555555;left:1384.6px;width:30px;text-align:center;">M</div>
<div class="t" style="top:306.5px;font-size:14.5px;color:#555555;-webkit-text-stroke:0.26px #555555;left:1412.9px;width:30px;text-align:center;">T</div>
<div class="t" style="top:306.5px;font-size:14.5px;color:#555555;-webkit-text-stroke:0.26px #555555;left:1441.2px;width:30px;text-align:center;">W</div>
<div class="t" style="top:306.5px;font-size:14.5px;color:#555555;-webkit-text-stroke:0.26px #555555;left:1469.5px;width:30px;text-align:center;">T</div>
<div class="t" style="top:306.5px;font-size:14.5px;color:#555555;-webkit-text-stroke:0.26px #555555;left:1497.8px;width:30px;text-align:center;">F</div>
<div class="t" style="top:306.5px;font-size:14.5px;color:#555555;-webkit-text-stroke:0.26px #555555;left:1526.1px;width:30px;text-align:center;">S</div>
<div class="t" style="top:306.5px;font-size:14.5px;color:#555555;-webkit-text-stroke:0.26px #555555;left:1554.4px;width:30px;text-align:center;">S</div>
<div class="t" style="top:306.5px;font-size:14.5px;color:#555555;-webkit-text-stroke:0.26px #555555;left:1582.7px;width:30px;text-align:center;">M</div>
<div class="t" style="top:306.5px;font-size:14.5px;color:#555555;-webkit-text-stroke:0.26px #555555;left:1611.0px;width:30px;text-align:center;">T</div>
<div class="t" style="top:306.5px;font-size:14.5px;color:#555555;-webkit-text-stroke:0.26px #555555;left:1639.2px;width:30px;text-align:center;">W</div>
<div class="t" style="top:306.5px;font-size:14.5px;color:#555555;-webkit-text-stroke:0.26px #555555;left:1667.5px;width:30px;text-align:center;">T</div>
<div class="t" style="top:306.5px;font-size:14.5px;color:#555555;-webkit-text-stroke:0.26px #555555;left:1695.8px;width:30px;text-align:center;">F</div>
<div class="t" style="top:306.5px;font-size:14.5px;color:#555555;-webkit-text-stroke:0.26px #555555;left:1724.1px;width:30px;text-align:center;">S</div>
<div class="t" style="top:306.5px;font-size:14.5px;color:#555555;-webkit-text-stroke:0.26px #555555;left:1752.4px;width:30px;text-align:center;">S</div>
<div class="t" style="top:306.5px;font-size:14.5px;color:#555555;-webkit-text-stroke:0.26px #555555;left:1780.7px;width:30px;text-align:center;">M</div>
<div class="t" style="top:386.0px;font-size:18px;color:#444444;-webkit-text-stroke:0.32px #444444;left:938.3px;letter-spacing:0.541px;">Coordinate with Brokers</div>
<div class="t" style="top:433.6px;font-size:18px;color:#444444;-webkit-text-stroke:0.32px #444444;left:1023.3px;letter-spacing:0.333px;">Coordinate with Truckers and VC</div>
<div class="t" style="top:481.3px;font-size:18px;color:#444444;-webkit-text-stroke:0.32px #444444;left:1080.0px;letter-spacing:0.428px;">Collect Customs Documentation</div>
<div class="t" style="top:528.9px;font-size:18px;color:#444444;-webkit-text-stroke:0.32px #444444;left:1108.3px;letter-spacing:0.746px;">Transportation</div>
<div class="t" style="top:576.4px;font-size:18px;color:#444444;-webkit-text-stroke:0.32px #444444;left:1136.0px;letter-spacing:0.513px;">Arrival at the Port</div>
<div class="t" style="top:624.0px;font-size:18px;color:#444444;-webkit-text-stroke:0.32px #444444;left:1224.3px;letter-spacing:0.106px;">Custom Clearance POO</div>
<div class="t" style="top:671.6px;font-size:18px;color:#444444;-webkit-text-stroke:0.32px #444444;left:1474.9px;letter-spacing:0.257px;">Cargo Tracking</div>
<div class="t" style="top:719.1px;font-size:18px;color:#444444;-webkit-text-stroke:0.32px #444444;left:1503.3px;letter-spacing:0.236px;">Arrival at POD</div>
<div class="t" style="top:766.7px;font-size:18px;color:#444444;-webkit-text-stroke:0.32px #444444;left:1531.3px;letter-spacing:0.270px;">Custom Clearance at Port</div>
<div class="t" style="top:814.3px;font-size:18px;color:#444444;-webkit-text-stroke:0.32px #444444;left:1730.3px;letter-spacing:0.527px;">Door to Door Delivery</div>
<div class="t" style="top:356.3px;font-size:18px;color:#383838;-webkit-text-stroke:0.32px #383838;left:1588.2px;letter-spacing:0.053px;">Weeks</div>
</div>
</body></html>
